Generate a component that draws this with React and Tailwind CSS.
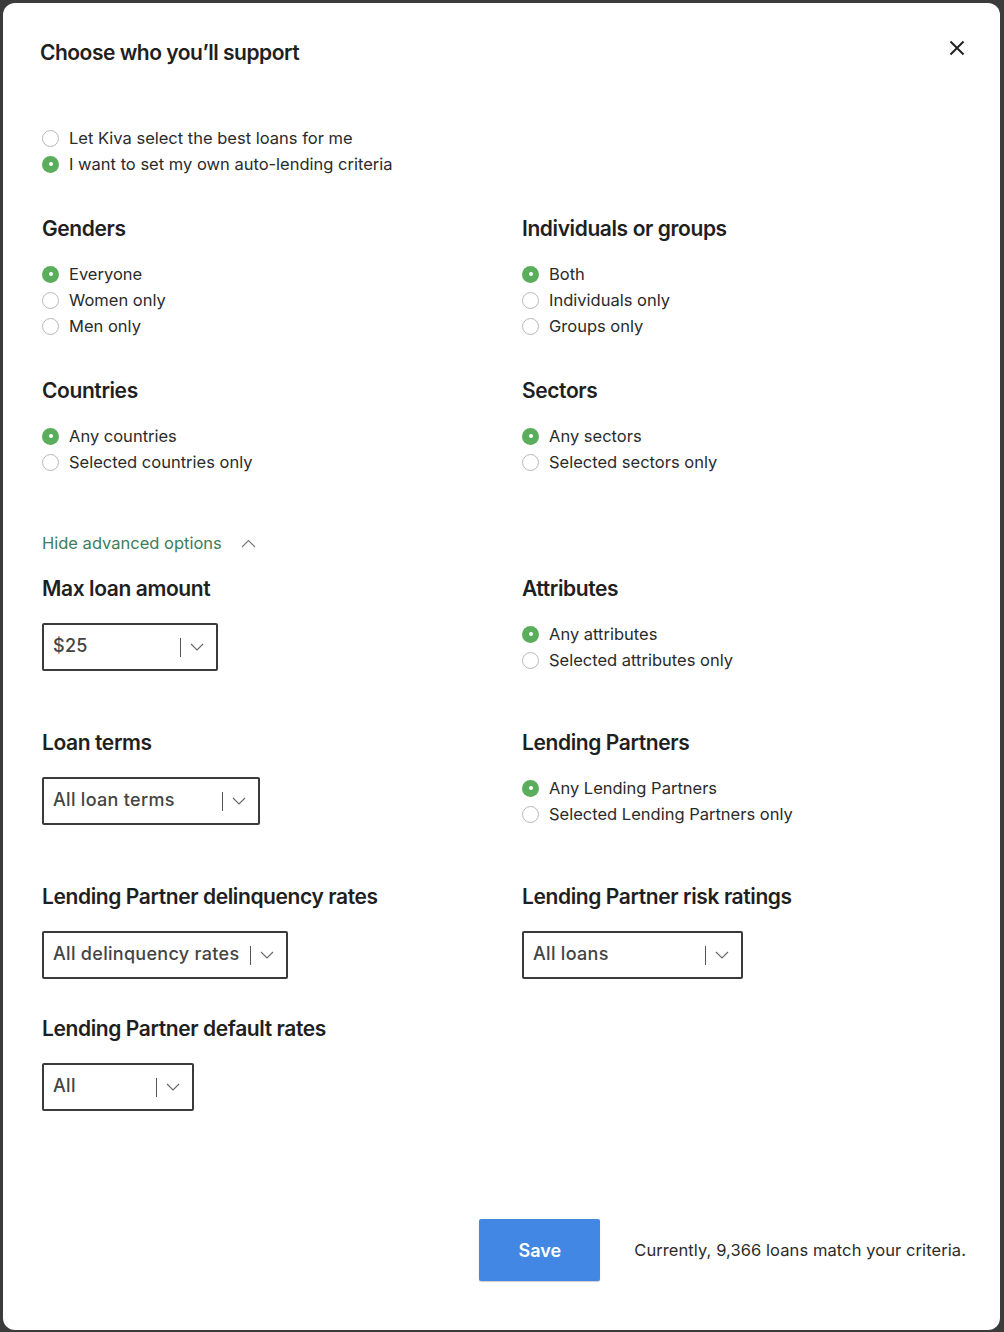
import { useState } from "react";

const FONT = { fontFamily: "Inter, 'Noto Sans', sans-serif" };

function Radio({ checked, label, onChange }) {
  return (
    <label className="flex h-[26px] cursor-pointer items-center" onClick={onChange}>
      <span
        className={
          checked
            ? "flex h-[17px] w-[17px] items-center justify-center rounded-full bg-[#5aae5b]"
            : "h-[17px] w-[17px] rounded-full border-[1.5px] border-[#b8b8b8] bg-white"
        }
      >
        {checked && <span className="h-[4px] w-[4px] rounded-full bg-white" />}
      </span>
      <span className="ml-[10px] text-[16.5px] text-[#2b2b2b]">{label}</span>
    </label>
  );
}

function RadioGroup({ options, initial = 0, className = "" }) {
  const [value, setValue] = useState(initial);
  return (
    <div className={className}>
      {options.map((opt, i) => (
        <Radio key={opt} label={opt} checked={value === i} onChange={() => setValue(i)} />
      ))}
    </div>
  );
}

function Heading({ children }) {
  return (
    <h2 className="h-[28px] text-[21px] font-semibold leading-[28px] tracking-[-0.4px] text-[#1f1f1f]">
      {children}
    </h2>
  );
}

function Select({ value, width }) {
  return (
    <div
      className="mt-5 flex h-[48px] items-center rounded-[2px] border-2 border-[#3a3a3a] pl-[9px] pr-[12px]"
      style={{ width }}
    >
      <span className="flex-1 pb-[3px] text-[18px] font-medium tracking-[0.3px] text-[#444]">{value}</span>
      <span className="h-[19px] w-px bg-[#555]" />
      <svg className="ml-[9px]" width="14" height="8" viewBox="0 0 14 8" fill="none">
        <path d="M1 1l6 6 6-6" stroke="#666" strokeWidth="1.1" />
      </svg>
    </div>
  );
}

export default function App() {
  const [own, setOwn] = useState(1);

  return (
    <div className="min-h-[1332px] bg-[#3b3b3b] p-[3px]" style={FONT}>
      <div className="relative flex h-[1327px] w-[997px] flex-col rounded-[12px] bg-white px-[39px] pt-[36px]">
        <button className="absolute right-[31px] top-[33px] p-1" aria-label="Close">
          <svg width="16" height="16" viewBox="0 0 16 16" fill="none">
            <path d="M1.5 1.5l13 13M14.5 1.5l-13 13" stroke="#222" strokeWidth="2" />
          </svg>
        </button>

        <h1 className="-ml-[2px] h-[28px] text-[21px] font-semibold leading-[28px] tracking-[-0.5px] text-[#1f1f1f]">
          Choose who you’ll support
        </h1>

        <div className="mt-[58px]">
          <Radio label="Let Kiva select the best loans for me" checked={own === 0} onChange={() => setOwn(0)} />
          <Radio label="I want to set my own auto-lending criteria" checked={own === 1} onChange={() => setOwn(1)} />
        </div>

        <div className="mt-[38px] grid grid-cols-[480px_1fr]">
          <div>
            <Heading>Genders</Heading>
            <RadioGroup className="mt-[18px]" options={["Everyone", "Women only", "Men only"]} />
          </div>
          <div>
            <Heading>Individuals or groups</Heading>
            <RadioGroup className="mt-[18px]" options={["Both", "Individuals only", "Groups only"]} />
          </div>
        </div>

        <div className="mt-[38px] grid grid-cols-[480px_1fr]">
          <div>
            <Heading>Countries</Heading>
            <RadioGroup className="mt-[18px]" options={["Any countries", "Selected countries only"]} />
          </div>
          <div>
            <Heading>Sectors</Heading>
            <RadioGroup className="mt-[18px]" options={["Any sectors", "Selected sectors only"]} />
          </div>
        </div>

        <button className="mt-[55px] flex h-[26px] items-center self-start text-[16.5px] text-[#3d7d5d]">
          Hide advanced options
          <svg className="ml-[19px]" width="15" height="9" viewBox="0 0 15 9" fill="none">
            <path d="M1 8l6.5-6.5L14 8" stroke="#777" strokeWidth="1.1" />
          </svg>
        </button>

        <div className="mt-[19px] grid grid-cols-[480px_1fr]">
          <div>
            <Heading>Max loan amount</Heading>
            <Select value="$25" width={176} />
          </div>
          <div>
            <Heading>Attributes</Heading>
            <RadioGroup className="mt-[18px]" options={["Any attributes", "Selected attributes only"]} />
          </div>
        </div>

        <div className="mt-[56px] grid grid-cols-[480px_1fr]">
          <div>
            <Heading>Loan terms</Heading>
            <Select value="All loan terms" width={218} />
          </div>
          <div>
            <Heading>Lending Partners</Heading>
            <RadioGroup className="mt-[18px]" options={["Any Lending Partners", "Selected Lending Partners only"]} />
          </div>
        </div>

        <div className="mt-[56px] grid grid-cols-[480px_1fr]">
          <div>
            <Heading>Lending Partner delinquency rates</Heading>
            <Select value="All delinquency rates" width={246} />
          </div>
          <div>
            <Heading>Lending Partner risk ratings</Heading>
            <Select value="All loans" width={221} />
          </div>
        </div>

        <div className="mt-[36px]">
          <Heading>Lending Partner default rates</Heading>
          <Select value="All" width={152} />
        </div>

        <div className="mt-[108px] flex items-center justify-end">
          <button className="h-[62px] w-[121px] rounded-[2px] bg-[#4287e3] text-[18px] font-semibold text-white shadow-[0_1px_1px_rgba(0,0,0,0.2)]">
            Save
          </button>
          <p className="ml-[34px] mr-[-5px] text-[16.5px] tracking-[0.08px] text-[#2b2b2b]">
            Currently, 9,366 loans match your criteria.
          </p>
        </div>
      </div>
    </div>
  );
}
